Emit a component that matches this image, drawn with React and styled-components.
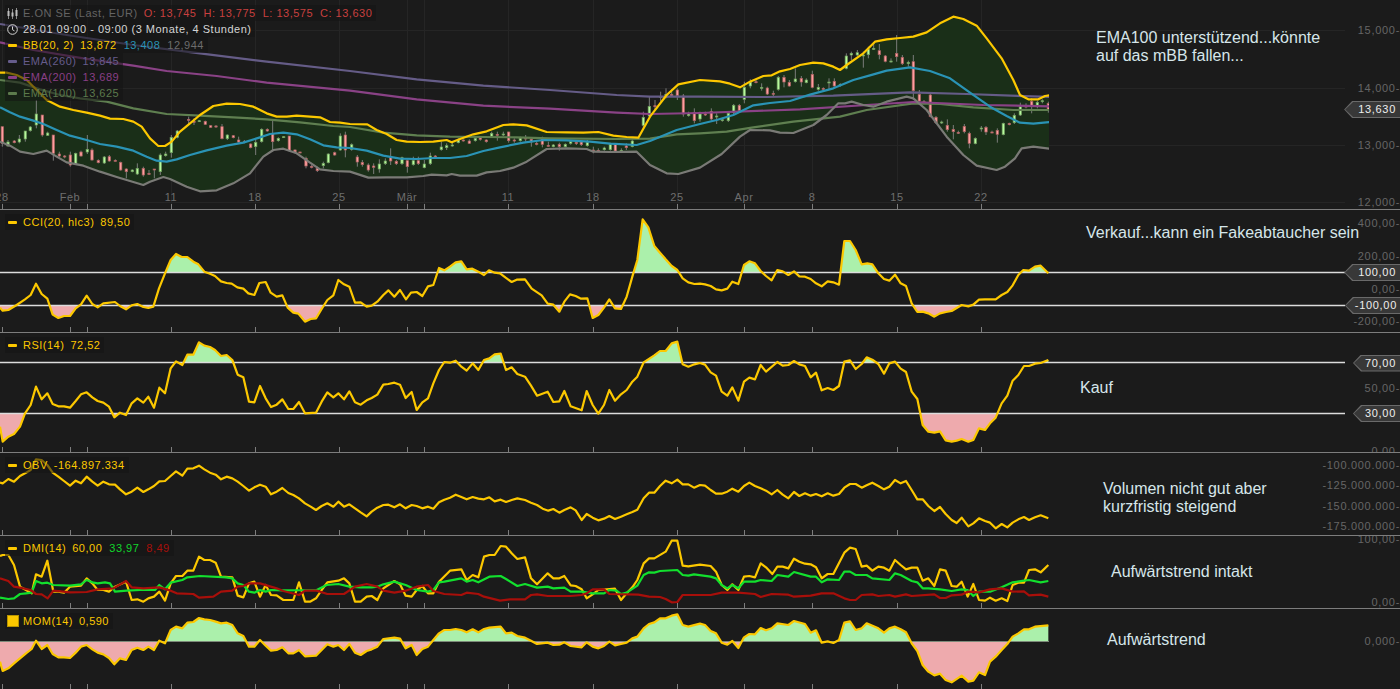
import styled, { createGlobalStyle } from "styled-components";

const GlobalStyle = createGlobalStyle`
  html, body {
    margin: 0;
    padding: 0;
    background: #1b1b1b;
  }
`;

// series were read off 3x crops, so every run holds crop coordinates
const run = (xOff, yOff, flat) => {
  const out = [];
  for (let i = 0; i < flat.length; i += 2) {
    out.push([xOff + flat[i] / 3, yOff + flat[i + 1] / 3]);
  }
  return out;
};
const toPoints = (list) => list.map(([x, y]) => `${x},${y}`).join(" ");

const BB_UPPER = [
  ...run(0, 0, [0,218,20,218,50,225,80,240,110,270,140,300,180,320,220,330,260,338,300,347,330,356,370,357,400,365,425,380,450,415,475,438,495,438,515,425,540,395,570,370,600,345,640,318,680,311,720,312,760,320,800,340,830,350,860,350,890,347,920,349,960,352,990,366,1020,368]),
  ...run(350, 0, [0,372,52,373,80,390,110,402,140,420,170,425,210,426,250,425,290,420,305,427,330,417,370,403,410,394,460,375,490,373,530,376,590,396,650,397,700,398,745,396,790,407,830,411,865,413,900,350,950,285,985,253]),
  ...run(700, 0, [0,240,60,244,90,251,120,262,150,245,190,228,215,226,240,214,270,207,300,195,340,188,370,190,400,200,420,210,440,195,490,160,525,125,560,118,600,114,640,110,680,97,720,70,760,50,790,57,830,77,860,115,905,175,940,240,960,285,985,298,1015,298,1035,288,1050,286]),
];
const BB_MID = [
  ...run(0, 0, [0,322,30,337,60,350,100,362,130,372,170,390,210,407,260,420,300,432,350,440,400,452,440,470,470,482,500,485,530,478,570,465,620,451,680,437,730,428,780,412,810,402,850,398,890,403,930,418,970,436,1010,442]),
  ...run(350, 0, [0,444,50,452,100,467,150,476,200,477,250,474,300,474,350,468,400,453,450,442,520,428,580,420,650,421,720,425,780,431,860,435,900,423,980,390]),
  ...run(700, 0, [0,372,50,360,100,345,160,316,210,309,270,303,330,284,400,265,460,240,510,226,560,212,630,202,690,213,750,235,810,278,870,320,920,348,960,368,1000,371,1050,366]),
];
const BB_LOWER = [
  ...run(0, 0, [0,425,30,437,60,455,100,462,140,452,170,470,200,487,250,497,300,515,350,531,430,555,450,545,490,531,510,537,560,560,600,574,650,571,700,550,750,520,790,470,820,450,850,446,890,460,930,488,960,508,1000,513]),
  ...run(350, 0, [0,515,55,533,110,532,170,532,220,528,245,524,290,526,305,522,330,527,380,527,410,517,450,513,490,503,530,485,590,447,650,445,710,447,730,455,780,456,860,455,900,495,950,520,985,522]),
  ...run(700, 0, [0,503,65,462,120,410,150,390,210,391,240,398,280,399,340,375,380,345,415,310,435,310,455,305,490,315,520,320,560,305,620,290,640,295,680,330,740,410,790,465,830,497,890,510,915,500,945,475,965,445,1000,440,1050,446]),
];
const EMA100 = [
  ...run(0, 0, [0,240,60,248,120,268,180,285,240,295,320,305,400,325,500,342,600,347,700,352,800,358,900,367,1000,378]),
  ...run(350, 0, [0,381,100,398,200,406,300,410,400,411,500,412,600,415,800,417,900,416,980,403]),
  ...run(700, 0, [0,400,80,395,160,382,280,365,420,350,500,330,640,310,720,312,820,322,940,330,1050,330]),
];
const EMA200 = [
  ...run(0, 0, [0,127,100,150,250,175,400,197,500,213,650,228,800,248]),
  ...run(350, 0, [0,272,200,298,400,317,600,326,800,338,900,342]),
  ...run(700, 0, [0,339,300,328,500,315,640,306,850,315,1050,319]),
];
const EMA260 = [
  ...run(0, 0, [0,72,200,105,400,135,600,160,800,185]),
  ...run(350, 0, [0,213,200,238,400,257,600,270,800,285,900,290]),
  ...run(700, 0, [0,290,200,291,400,287,630,277,800,282,1050,291]),
];

// x, body top, body bottom, wick top, wick bottom, 1 = rising
const CANDLES = [
  [0, [7,380,430,380,440,0,24,426,438,420,440,1,43,423,428,420,430,0,58,417,426,405,430,1,76,393,417,393,425,1,91,381,392,378,395,1,109,342,375,300,385,1,127,345,405,345,410,0,143,399,406,395,408,1,160,405,460,405,482,0,178,462,468,455,472,0,194,468,470,465,475,0,211,465,495,455,500,0,227,460,492,458,495,1,243,456,468,452,470,0,262,448,456,405,462,1,276,450,480,445,482,0,295,481,488,478,490,0,313,471,489,468,492,1,328,470,483,465,485,0,346,481,482,478,484,0,362,487,510,485,512,0,379,507,515,505,535,0,397,510,515,508,517,1,412,505,522,490,525,1,430,505,525,500,530,0,447,520,522,510,525,0,463,507,510,507,535,0,481,465,515,460,525,1,497,462,467,455,470,1,514,412,458,405,473,1,532,393,412,390,415,1,566,358,360,350,372,0,582,364,366,355,375,0,598,362,364,360,366,1,616,364,373,362,375,0,632,377,382,375,384,0,648,378,380,375,384,0,666,380,416,372,418,0,682,405,416,403,420,1,700,407,413,405,415,0,716,420,426,410,428,0,733,425,427,420,430,0,752,432,443,430,445,0,767,427,440,420,465,1,785,388,425,385,428,1,802,388,393,385,395,0,818,400,425,362,455,0,835,415,422,412,425,1,851,410,412,408,414,1,868,408,452,408,455,0,885,450,456,448,460,0,900,456,458,455,460,0,918,475,498,470,505,0,935,499,501,495,505,0,952,505,512,500,516,0,970,490,497,485,505,1,985,462,488,460,490,1,1004,458,465,455,467,0,1021,408,450,400,452,1,1036,405,450,395,472,0]],
  [350, [5,434,448,430,452,1,22,471,486,465,500,0,37,487,494,480,500,0,55,495,510,490,515,0,71,498,502,490,522,0,88,492,507,478,518,1,106,483,491,475,495,1,122,473,483,445,495,0,139,484,491,480,495,0,156,473,491,470,495,1,172,482,500,478,518,0,190,482,494,470,497,1,205,482,491,470,495,0,223,492,503,480,505,1,241,468,491,458,495,1,256,468,471,465,475,0,274,441,449,425,452,1,290,437,443,430,450,1,307,435,436,425,440,1,325,420,428,415,430,1,340,420,422,418,425,0,358,423,430,418,432,0,376,415,422,410,425,1,391,414,418,408,422,0,409,420,425,418,428,0,425,400,409,395,412,1,442,403,404,395,422,0,460,402,404,395,408,1,476,396,422,395,428,0,493,420,423,415,428,0,511,414,422,410,425,1,527,414,416,405,425,0,544,418,426,415,440,0,560,430,432,425,436,0,577,415,433,410,442,0,595,436,438,425,440,0,610,435,440,432,442,1,628,433,440,428,452,0,646,433,440,430,442,1,662,425,430,420,434,1,679,427,431,425,435,0,694,426,434,425,438,0,712,427,437,420,440,1,730,450,452,440,460,0,745,451,453,445,456,0,763,444,449,440,452,1,781,433,449,428,452,1,796,431,453,430,456,0,814,451,453,445,458,1,829,438,443,430,450,0,847,423,440,418,442,1,880,352,376,335,385,1,898,319,348,290,352,1,915,317,318,300,330,0,932,289,292,275,305,1,948,283,292,265,295,1,965,283,287,268,290,0,982,270,287,265,300,0,1000,288,342,282,350,0,1016,342,347,335,350,1,1033,338,362,325,370,0]],
  [700, [0,342,357,335,365,1,16,342,344,335,348,0,34,334,357,325,362,0,50,348,350,340,372,1,67,359,361,355,365,1,85,340,362,335,366,1,101,316,338,312,345,1,118,316,332,312,335,0,133,262,298,245,310,1,151,247,258,238,265,1,168,245,247,240,250,0,185,262,264,250,272,1,202,264,282,260,285,0,220,280,282,272,290,0,235,232,268,228,272,1,252,232,246,225,262,0,268,247,258,240,260,0,286,237,245,205,248,1,304,235,246,228,260,0,319,240,248,235,250,1,337,223,262,212,265,0,355,262,268,252,272,1,370,265,267,262,270,0,387,246,248,235,270,1,403,244,258,235,260,0,421,253,257,250,260,1,439,168,205,160,208,1,454,160,165,155,180,1,472,158,165,150,168,1,490,165,167,155,203,1,505,148,164,140,175,1,521,145,147,130,150,1,538,152,164,132,178,0,556,168,184,165,187,0,573,183,185,175,188,1,590,160,170,105,185,0,607,172,191,165,195,0,625,187,191,182,200,1,640,185,272,165,300,0,658,283,303,270,315,0,672,305,307,300,312,0,691,285,349,280,352,0,708,352,368,348,372,0,725,366,368,362,372,1,742,376,389,358,395,0,760,388,395,375,418,0,775,397,399,392,402,0,793,379,395,372,400,0,808,400,430,395,445,0,826,415,431,412,433,1,844,384,386,378,395,1,858,382,396,378,405,0,876,396,398,392,400,0,892,391,403,385,428,0,910,370,404,368,406,1,928,370,374,368,376,0,943,346,368,340,372,1,961,320,345,308,348,1,978,318,320,310,325,0,995,304,318,295,340,0,1012,307,316,302,325,1,1027,302,305,298,310,1,1045,310,328,305,338,0]],
].flatMap(([off, f]) => {
  const out = [];
  for (let i = 0; i < f.length; i += 6) {
    out.push({
      x: off + f[i] / 3,
      top: f[i + 1] / 3,
      bottom: f[i + 2] / 3,
      wickTop: f[i + 3] / 3,
      wickBottom: f[i + 4] / 3,
      up: f[i + 5] === 1,
    });
  }
  return out;
});

const CCI = [
  ...run(0, 210, [0,293,8,302,25,300,50,285,75,268,92,255,108,221,125,252,142,266,158,314,175,324,192,318,210,318,227,295,243,283,260,257,277,282,293,292,310,280,345,276,360,288,378,298,395,286,412,282,430,291,445,294,460,290,477,235,495,190,512,150,528,132,545,141,562,141,580,155,595,163,613,185,630,191,645,198,663,214,680,219,695,221,712,232,730,236,745,250,763,255,778,219,797,216,812,248,830,260,847,256,863,293,880,308,895,311,915,335,932,327,948,325,965,297,982,270,1000,256,1015,210,1032,223,1048,230,1065,278,1082,277,1100,290,1115,287,1132,275,1150,255,1165,241,1183,260,1200,240,1218,268,1233,248,1250,246,1267,258,1284,229,1300,225,1317,174,1333,181,1350,170,1367,157,1384,154,1400,178,1417,176,1435,185,1452,195,1467,181,1484,188,1500,190,1517,203,1535,216,1550,209]),
  ...run(525, 210, [0,208,20,236,50,256,68,281,85,284,103,305,118,275,135,253,152,258,168,266,187,265,203,324,220,315,237,293,253,268,270,295,288,297,305,260,322,200,337,150,353,28,370,52,388,108,405,128,422,148,440,168,457,180,473,205,490,217,508,222,525,221,540,223,557,228,573,238,590,241,607,236,622,215,640,222,657,165,673,154,690,160,707,183,723,198,740,211,757,180,773,184,790,195,807,184,823,199,840,200,857,207,873,220,890,229,908,214,925,217,942,224,958,93,975,93,992,120,1010,163,1027,160,1042,163,1060,190,1077,207,1093,212,1110,194,1127,220,1143,228,1160,280,1177,306,1193,305,1210,310,1228,320,1245,310,1263,306,1280,303,1310,285,1330,289,1345,284,1362,269,1380,268,1412,268,1430,255,1447,246,1463,226,1480,195,1495,180,1512,182,1530,170,1547,167,1570,190]),
];
const RSI = [
  ...run(0, 210, [0,650,8,695,25,680,42,672,60,650,75,610,92,585,108,530,125,568,142,550,158,582,175,589,192,589,210,593,227,573,243,553,260,547,277,562,293,573,310,578,327,590,343,622,360,608,378,615,395,580,412,565,430,578,445,560,462,593,478,533,495,550,512,475,528,454,547,465,562,434,580,434,597,397,613,407,630,411,645,420,663,438,680,435,697,450,713,494,730,502,747,575,763,577,780,528,797,565,813,591,830,584,847,568,865,597,880,597,897,576,915,610,948,608,965,575,982,547,1000,562,1015,550,1032,568,1048,544,1065,577,1082,584,1100,571,1115,564,1132,554,1150,524,1165,522,1183,518,1200,524,1217,564,1235,546,1250,600,1267,577,1284,565,1300,520,1317,480,1333,456,1350,458,1367,452,1384,470,1400,482,1418,460,1435,480,1452,450,1468,445,1484,433,1502,431,1518,480,1535,472,1552,492]),
  ...run(525, 210, [0,500,18,527,36,557,68,545,85,576,103,574,118,543,137,589,170,601,185,543,203,585,220,611,237,585,253,540,270,572,288,553,305,540,322,515,337,500,356,457,388,436,405,423,422,423,440,400,457,395,473,463,490,470,508,463,525,459,540,464,557,487,573,497,590,545,607,557,622,532,640,572,657,515,673,503,690,508,707,465,723,485,757,456,773,467,790,465,807,453,823,463,840,468,857,502,873,488,890,541,908,534,925,540,942,528,958,455,975,451,992,477,1010,462,1025,442,1042,449,1060,462,1077,491,1093,460,1110,455,1127,476,1143,486,1160,545,1177,567,1193,645,1210,665,1228,668,1245,664,1262,691,1280,695,1295,692,1310,687,1330,695,1345,690,1362,655,1380,660,1395,640,1412,623,1430,580,1447,557,1463,512,1480,495,1497,468,1512,468,1530,461,1547,459,1570,450]),
];
const OBV = [
  ...run(0, 450, [0,98,8,100,25,87,42,95,60,78,75,70,92,60,108,28,125,30,142,45,158,68,175,80,192,93,210,107,227,92,243,100,260,80,277,95,293,107,310,95,327,103,345,104,360,118,378,133,395,125,412,113,430,126,445,118,462,108,478,94,495,93,512,78,528,64,547,77,562,56,580,55,597,47,613,58,630,68,647,74,663,88,680,80,697,85,713,95,730,108,747,122,763,112,780,104,797,110,813,133,830,125,847,114,865,129,880,135,897,145,915,160,932,170,948,180,965,168,982,160,1000,170,1015,155,1032,170,1048,163,1065,175,1082,187,1100,199,1115,185,1132,173,1150,165,1165,164,1183,172,1200,163,1217,175,1235,165,1250,168,1267,175,1284,170,1300,176,1317,157,1333,149,1350,143,1367,134,1384,141,1400,148,1418,141,1435,146,1452,148,1468,142,1484,154,1502,149,1518,156,1535,150,1552,145]),
  ...run(525, 450, [0,150,18,158,36,165,53,176,70,182,85,177,103,188,118,180,137,172,152,181,170,210,185,192,203,203,220,211,237,206,253,198,270,207,288,200,305,193,322,186,337,179,356,145,372,128,388,128,405,108,422,92,440,100,457,89,473,103,490,103,507,113,525,105,540,107,557,120,573,131,590,131,607,125,622,116,640,125,657,108,673,98,690,108,707,115,723,122,740,133,757,120,773,134,790,145,807,126,823,138,840,130,857,137,873,132,890,139,908,130,925,137,942,132,958,113,975,102,992,102,1010,113,1025,106,1042,98,1060,108,1077,118,1093,110,1110,90,1127,100,1143,93,1160,120,1177,148,1193,148,1210,168,1228,183,1245,171,1262,192,1280,210,1295,219,1310,203,1330,229,1345,220,1362,205,1380,213,1395,218,1412,235,1430,222,1447,232,1463,218,1480,208,1497,201,1512,210,1530,202,1547,196,1570,205]),
];
const DMI = [
  ...run(0, 450, [0,318,8,315,25,315,42,345,60,410,78,420,95,430,108,373,125,380,142,332,160,425,175,425,192,428,210,410,243,407,260,385,277,400,293,420,310,420,327,425,345,410,378,395,395,450,412,448,430,455,445,445,462,440,478,425,495,452,512,400,528,378,547,378,562,362,580,362,597,320,613,330,630,330,647,338,663,380,697,382,713,437,730,442,747,400,763,395,780,440,797,405,813,435,830,436,850,450,880,450,897,397,915,455,930,455,948,445,965,420,982,397,1015,392,1032,385,1048,400,1065,455,1082,455,1100,440,1115,438,1132,450,1150,415,1183,393,1200,403,1217,437,1235,440,1250,420,1267,408,1284,430,1300,430,1317,395,1350,362,1384,358,1400,390,1418,375,1435,382,1452,320,1468,315,1484,315,1502,288,1518,290,1535,310,1552,327]),
  ...run(525, 450, [0,322,18,385,36,403,68,370,85,385,103,385,118,378,137,406,152,408,170,418,185,445,203,433,220,420,270,416,288,450,305,430,322,412,337,390,356,340,372,325,388,325,422,305,440,272,457,272,473,347,490,349,525,344,557,348,573,365,590,405,607,420,622,403,640,420,657,380,673,378,690,382,707,340,723,352,742,372,757,350,773,350,790,355,807,326,823,335,840,341,857,343,873,352,890,385,908,372,925,372,958,308,975,293,992,297,1010,350,1025,347,1042,362,1060,350,1077,353,1093,362,1110,330,1127,345,1143,358,1160,353,1177,353,1193,392,1210,385,1228,408,1245,358,1262,362,1280,408,1295,410,1310,395,1328,440,1345,402,1362,450,1380,452,1395,443,1412,452,1430,445,1447,453,1463,405,1480,398,1497,398,1512,360,1530,358,1547,367,1570,345]),
];
const DMI_PLUS = [
  ...run(0, 450, [0,443,25,447,42,445,60,432,78,430,95,428,108,393,125,400,142,398,160,405,210,407,243,403,260,390,277,397,293,400,315,397,330,400,345,425,380,422,420,420,465,420,478,405,495,418,512,398,547,390,562,382,600,378,680,382,697,385,713,400,730,405,747,425,763,428,780,420,797,425,813,420,847,421,950,420,980,405,1015,402,1048,410,1082,412,1115,412,1132,410,1150,403,1183,395,1217,405,1250,420,1284,425,1300,420,1317,397,1333,395,1384,385,1400,395,1418,390,1435,397,1468,380,1502,378,1518,387,1552,408]),
  ...run(525, 450, [0,402,36,413,68,410,85,415,118,413,137,425,170,425,203,430,237,430,253,420,275,422,288,432,305,428,337,407,356,375,372,367,388,368,405,363,457,360,473,375,490,377,507,373,557,380,573,385,590,405,607,415,622,405,640,415,657,395,690,395,707,390,740,393,757,375,790,380,807,366,857,380,873,380,890,397,908,388,942,390,958,365,975,365,992,375,1025,375,1042,385,1093,390,1110,370,1127,375,1160,393,1177,397,1193,415,1210,415,1245,418,1280,423,1310,418,1328,420,1345,438,1362,425,1395,425,1430,412,1463,397,1497,392,1512,390,1547,397,1570,393]),
];
const DMI_MINUS = [
  ...run(0, 450, [0,385,25,393,42,410,60,413,92,420,108,432,125,433,143,445,160,422,210,427,260,426,293,418,340,415,378,393,395,412,430,415,478,412,512,422,530,430,580,432,597,443,640,440,663,425,697,422,713,410,730,408,747,400,780,400,830,415,850,423,897,435,915,422,950,422,982,432,1032,432,1065,410,1100,402,1132,410,1150,422,1183,428,1217,422,1250,410,1284,405,1300,423,1333,432,1384,435,1400,428,1435,432,1452,440,1500,452,1530,448]),
  ...run(525, 450, [0,448,18,435,36,433,68,438,137,438,170,435,185,430,203,418,237,418,253,432,340,434,372,440,405,441,422,447,440,457,457,456,473,435,557,435,590,428,640,428,690,432,707,441,740,432,790,434,807,440,857,437,890,430,925,430,958,445,975,450,992,450,1010,435,1042,433,1060,438,1093,435,1110,440,1143,433,1160,438,1228,433,1245,444,1262,444,1280,436,1310,434,1328,425,1362,427,1395,418,1430,415,1463,425,1497,424,1512,436,1547,434,1570,440]),
];
const MOM = [
  ...run(0, 450, [0,635,8,663,25,655,42,640,60,625,78,610,95,597,108,572,125,597,142,585,158,612,175,622,192,622,210,624,227,608,243,590,260,585,277,598,293,608,310,613,327,624,343,643,360,625,378,630,395,600,412,593,430,600,445,590,462,600,478,572,495,580,512,540,528,530,547,535,562,518,580,516,597,504,613,508,630,510,647,515,663,520,680,518,697,525,713,550,730,558,747,590,763,590,780,570,797,587,813,602,830,600,847,592,865,610,880,610,897,600,915,619,948,617,965,600,982,583,1000,590,1015,585,1032,600,1048,582,1065,608,1082,615,1100,603,1115,598,1132,590,1150,567,1183,563,1200,566,1217,595,1235,585,1250,615,1267,597,1284,590,1300,570,1317,550,1333,540,1350,540,1367,537,1384,540,1400,547,1418,538,1435,547,1452,537,1468,533,1502,530,1518,550,1535,548,1552,558]),
  ...run(525, 450, [0,563,18,572,36,582,68,578,85,585,103,584,118,577,137,588,170,592,185,577,203,590,220,595,237,588,253,575,270,586,288,582,305,578,322,565,337,560,356,535,372,522,388,517,405,505,422,505,440,497,457,493,473,525,490,530,525,521,540,525,557,543,573,550,590,578,607,584,622,573,640,594,657,562,673,552,690,553,707,534,723,541,740,535,757,520,790,525,807,513,840,522,857,548,873,541,890,578,908,574,925,579,942,570,958,518,975,514,992,540,1010,535,1025,520,1060,535,1077,548,1093,535,1110,530,1127,538,1143,547,1160,580,1177,603,1193,645,1210,665,1228,676,1245,671,1262,690,1280,697,1310,677,1330,695,1345,692,1362,667,1380,675,1395,635,1412,620,1430,600,1447,582,1463,560,1480,550,1497,538,1512,538,1530,530,1570,526]),
];

const TICKS = [2.5, 70.5, 87.5, 171.5, 255.5, 339.5, 407.5, 424.5, 508.5, 593.5, 677.5, 744.5, 812.5, 897.5, 981.5];
const DATE_LABELS = [
  [2, "28"], [70, "Feb"], [171, "11"], [255, "18"], [339, "25"], [407, "Mär"], [508, "11"],
  [593, "18"], [677, "25"], [744, "Apr"], [812, "8"], [897, "15"], [981, "22"],
];
const CHART_END = 1049;
const YELLOW = "#fcc800";

const Page = styled.div`
  width: 1400px;
  height: 689px;
  overflow: hidden;
  display: flex;
  flex-direction: column;
  background: #1b1b1b;
  font-family: "Liberation Sans", Arial, sans-serif;
`;

const Pane = styled.section`
  position: relative;
  flex: none;
  height: ${(p) => p.$height}px;
  display: flex;
  overflow: hidden;
  border-bottom: ${(p) => (p.$last ? "none" : "1px solid #7d7d7d")};
`;

const Plot = styled.svg`
  display: block;
  flex: none;
  width: 1345px;
  height: 100%;
`;

const Axis = styled.div`
  position: relative;
  flex: none;
  width: 55px;
`;

const AxisLabel = styled.span`
  position: absolute;
  right: 0;
  top: ${(p) => p.$y - 7}px;
  height: 14px;
  line-height: 14px;
  font-size: 11px;
  letter-spacing: 0.7px;
  white-space: nowrap;
  color: #666;
`;

const TagShape = styled.span`
  position: absolute;
  right: 0;
  top: ${(p) => p.$y - 8.5}px;
  height: 17px;
  padding: 1px 0 1px 1px;
  box-sizing: border-box;
  background: #6a6a6a;
  clip-path: polygon(8px 0, 100% 0, 100% 100%, 8px 100%, 0 50%);
`;

const TagText = styled.span`
  display: block;
  height: 15px;
  line-height: 15px;
  padding: 0 ${(p) => p.$pad}px 0 ${(p) => p.$lead}px;
  font-size: 11px;
  letter-spacing: 0.7px;
  color: #eee;
  background: #383838;
  clip-path: polygon(8px 0, 100% 0, 100% 100%, 8px 100%, 0 50%);
`;

const Legend = styled.div`
  position: absolute;
  left: 5px;
  top: ${(p) => p.$top ?? 4}px;
  display: flex;
  flex-direction: column;
  align-items: flex-start;
`;

const LegendRow = styled.div`
  height: 16px;
  padding: 0 4px 0 3px;
  display: flex;
  align-items: center;
  gap: 6px;
  font-size: 11px;
  letter-spacing: 0.5px;
  white-space: nowrap;
  background: rgba(20, 20, 20, 0.55);
`;

const Values = styled.span`
  display: flex;
  gap: 7px;
`;

const Value = styled.span`
  color: ${(p) => p.$color};
`;

const Swatch = styled.i`
  flex: none;
  width: 9px;
  height: 3px;
  border-radius: 1px;
  background: ${(p) => p.$color};
`;

const SquareSwatch = styled.i`
  flex: none;
  width: 10px;
  height: 10px;
  margin: 0 -2px 0 -1px;
  border: 1px solid #b89400;
  background: ${YELLOW};
`;

const LegendIcon = styled.svg`
  flex: none;
  width: 11px;
  height: 11px;
  margin: 0 -1px;
`;

const Note = styled.p`
  position: absolute;
  left: ${(p) => p.$left}px;
  top: ${(p) => p.$top}px;
  margin: 0;
  font-size: 16px;
  line-height: 18px;
  white-space: nowrap;
  color: #d6e6ea;
`;

const DateLabel = styled.text`
  font-size: 11px;
  letter-spacing: 0.55px;
  fill: #6e6e6e;
  text-anchor: middle;
`;

const Line = ({ points, color, width = 2.2 }) => (
  <polyline
    points={toPoints(points)}
    fill="none"
    stroke={color}
    strokeWidth={width}
    strokeLinejoin="round"
  />
);

const TickMarks = ({ bottom }) => (
  <g stroke="#7d7d7d">
    {TICKS.map((x) => (
      <line key={x} x1={x} x2={x} y1={bottom - 5} y2={bottom} />
    ))}
  </g>
);

// green above the upper level, pink below the lower one
const Shaded = ({ id, points, top, upper, lower, bottom }) => {
  const first = points[0][0];
  const last = points[points.length - 1][0];
  const shape = (level) =>
    toPoints([[first, level], ...points, [last, level]]);
  return (
    <g>
      <clipPath id={`${id}-up`}>
        <rect x="0" y={top} width={CHART_END} height={upper - top} />
      </clipPath>
      <clipPath id={`${id}-down`}>
        <rect x="0" y={lower} width={CHART_END} height={bottom - lower} />
      </clipPath>
      <polygon points={shape(upper)} fill="#abf0ab" clipPath={`url(#${id}-up)`} />
      <polygon points={shape(lower)} fill="#eeaaad" clipPath={`url(#${id}-down)`} />
    </g>
  );
};

const Level = ({ y }) => (
  <line x1="0" x2="1346" y1={y} y2={y} stroke="#dcdcdc" strokeWidth="1.3" />
);

const Candle = ({ candle }) => {
  const { x, top, bottom, wickTop, wickBottom, up } = candle;
  return (
    <g>
      <line x1={x} x2={x} y1={wickTop} y2={wickBottom} stroke="#858585" strokeWidth="0.9" />
      <rect
        x={x - 1.2}
        y={top}
        width="2.4"
        height={Math.max(bottom - top, 1)}
        fill={up ? "#b6fa9c" : "#ff9d9d"}
        stroke={up ? "#6e9a5c" : "#a85f5f"}
        strokeWidth="0.7"
      />
    </g>
  );
};

const BarsIcon = () => (
  <LegendIcon viewBox="0 0 11 11" fill="none">
    <path d="M1.5 0v11M5.5 1v10M9.5 0v11" stroke="#8a8a8a" />
    <rect x="0.5" y="3" width="2" height="5" fill="#bdbdbd" />
    <rect x="4.5" y="4.5" width="2" height="4" fill="#bdbdbd" />
    <rect x="8.5" y="2" width="2" height="6" fill="#bdbdbd" />
  </LegendIcon>
);

const ClockIcon = () => (
  <LegendIcon viewBox="0 0 11 11" fill="none" stroke="#d8d8d8" strokeWidth="1">
    <circle cx="5.5" cy="5.5" r="4.8" />
    <path d="M5.5 2.5v3.2l2 1.2" />
  </LegendIcon>
);

const MainLegend = () => (
  <Legend $top={5}>
    <LegendRow>
      <BarsIcon />
      <Value $color="#646464">E.ON SE (Last, EUR)</Value>
      <Values>
        <Value $color="#c8403f">O: 13,745</Value>
        <Value $color="#c8403f">H: 13,775</Value>
        <Value $color="#c8403f">L: 13,575</Value>
        <Value $color="#c8403f">C: 13,630</Value>
      </Values>
    </LegendRow>
    <LegendRow>
      <ClockIcon />
      <Value $color="#d4d4d4">28.01 09:00 - 09:00 (3 Monate, 4 Stunden)</Value>
    </LegendRow>
    <LegendRow>
      <Swatch $color={YELLOW} />
      <Value $color={YELLOW}>BB(20, 2)</Value>
      <Values>
        <Value $color={YELLOW}>13,872</Value>
        <Value $color="#2a93b5">13,408</Value>
        <Value $color="#6c6c6c">12,944</Value>
      </Values>
    </LegendRow>
    <LegendRow>
      <Swatch $color="#665c8c" />
      <Value $color="#665c8c">EMA(260)</Value>
      <Value $color="#665c8c">13,845</Value>
    </LegendRow>
    <LegendRow>
      <Swatch $color="#8a3f86" />
      <Value $color="#8a3f86">EMA(200)</Value>
      <Value $color="#8a3f86">13,689</Value>
    </LegendRow>
    <LegendRow>
      <Swatch $color="#5c7a4c" />
      <Value $color="#5c7a4c">EMA(100)</Value>
      <Value $color="#5c7a4c">13,625</Value>
    </LegendRow>
  </Legend>
);

const IndicatorLegend = ({ name, values, square }) => (
  <Legend>
    <LegendRow>
      {square ? <SquareSwatch /> : <Swatch $color={YELLOW} />}
      <Value $color={YELLOW}>{name}</Value>
      <Values>
        {values.map(([text, color]) => (
          <Value key={text} $color={color}>
            {text}
          </Value>
        ))}
      </Values>
    </LegendRow>
  </Legend>
);

const MainPane = () => (
  <Pane $height={209}>
    <Plot viewBox="0 0 1345 209" preserveAspectRatio="none">
      <clipPath id="main-clip">
        <rect x="0" y="0" width={CHART_END} height="209" />
      </clipPath>
      <g stroke="#252525">
        {[30.5, 88.5, 145.5, 202.5].map((y) => (
          <line key={y} x1="0" x2="1345" y1={y} y2={y} />
        ))}
        {TICKS.map((x) => (
          <line key={x} x1={x} x2={x} y1="0" y2="209" />
        ))}
      </g>
      <g clipPath="url(#main-clip)">
        <polygon
          points={toPoints([...BB_UPPER, ...[...BB_LOWER].reverse()])}
          fill="#1a2f18"
        />
        {CANDLES.map((candle, i) => (
          <Candle key={i} candle={candle} />
        ))}
        <Line points={EMA100} color="#5f7f50" />
        <Line points={EMA200} color="#8a4286" />
        <Line points={EMA260} color="#655c87" />
        <Line points={BB_LOWER} color="#7a7a76" />
        <Line points={BB_MID} color="#2a93b5" />
        <Line points={BB_UPPER} color={YELLOW} />
      </g>
      {DATE_LABELS.map(([x, text], i) => (
        <DateLabel key={i} x={x} y="201">
          {text}
        </DateLabel>
      ))}
      <TickMarks bottom={209} />
    </Plot>
    <Axis>
      <AxisLabel $y={30}>15,000-</AxisLabel>
      <AxisLabel $y={88}>14,000-</AxisLabel>
      <TagShape $y={109.5}>
        <TagText $lead={13} $pad={4}>13,630</TagText>
      </TagShape>
      <AxisLabel $y={145}>13,000-</AxisLabel>
      <AxisLabel $y={202}>12,000-</AxisLabel>
    </Axis>
    <MainLegend />
    <Note $left={1096} $top={29}>
      EMA100 unterstützend...könnte
      <br />
      auf das mBB fallen...
    </Note>
  </Pane>
);

const CciPane = () => (
  <Pane $height={122}>
    <Plot viewBox="0 210 1345 122" preserveAspectRatio="none">
      <Shaded id="cci" points={CCI} top={210} upper={272.5} lower={305.5} bottom={332} />
      <Level y={272.5} />
      <Level y={305.5} />
      <Line points={CCI} color={YELLOW} />
      <TickMarks bottom={332} />
    </Plot>
    <Axis>
      <AxisLabel $y={13}>400,00-</AxisLabel>
      <AxisLabel $y={46}>200,00-</AxisLabel>
      <TagShape $y={62.5}>
        <TagText $lead={13} $pad={4}>100,00</TagText>
      </TagShape>
      <AxisLabel $y={79}>0,00-</AxisLabel>
      <TagShape $y={95.5}>
        <TagText $lead={9} $pad={3}>-100,00</TagText>
      </TagShape>
      <AxisLabel $y={111}>-200,00-</AxisLabel>
    </Axis>
    <IndicatorLegend name="CCI(20, hlc3)" values={[["89,50", YELLOW]]} />
    <Note $left={1086} $top={14}>Verkauf...kann ein Fakeabtaucher sein</Note>
  </Pane>
);

const RsiPane = () => (
  <Pane $height={119}>
    <Plot viewBox="0 333 1345 119" preserveAspectRatio="none">
      <Shaded id="rsi" points={RSI} top={333} upper={362.5} lower={413.5} bottom={452} />
      <Level y={362.5} />
      <Level y={413.5} />
      <Line points={RSI} color={YELLOW} />
      <TickMarks bottom={452} />
    </Plot>
    <Axis>
      <TagShape $y={30}>
        <TagText $lead={11} $pad={4}>70,00</TagText>
      </TagShape>
      <AxisLabel $y={55}>50,00-</AxisLabel>
      <TagShape $y={80.5}>
        <TagText $lead={11} $pad={4}>30,00</TagText>
      </TagShape>
      <AxisLabel $y={118}>0,00-</AxisLabel>
    </Axis>
    <IndicatorLegend name="RSI(14)" values={[["72,52", YELLOW]]} />
    <Note $left={1080} $top={46}>Kauf</Note>
  </Pane>
);

const ObvPane = () => (
  <Pane $height={82}>
    <Plot viewBox="0 453 1345 82" preserveAspectRatio="none">
      <Line points={OBV} color={YELLOW} />
      <TickMarks bottom={535} />
    </Plot>
    <Axis>
      <AxisLabel $y={12}>-100.000.000-</AxisLabel>
      <AxisLabel $y={32}>-125.000.000-</AxisLabel>
      <AxisLabel $y={53}>-150.000.000-</AxisLabel>
      <AxisLabel $y={73}>-175.000.000-</AxisLabel>
    </Axis>
    <IndicatorLegend name="OBV" values={[["-164.897.334", YELLOW]]} />
    <Note $left={1103} $top={27}>
      Volumen nicht gut aber
      <br />
      kurzfristig steigend
    </Note>
  </Pane>
);

const DmiPane = () => (
  <Pane $height={72}>
    <Plot viewBox="0 536 1345 72" preserveAspectRatio="none">
      <Line points={DMI} color={YELLOW} />
      <Line points={DMI_PLUS} color="#12e02e" />
      <Line points={DMI_MINUS} color="#a80f0a" />
      <TickMarks bottom={608} />
    </Plot>
    <Axis>
      <AxisLabel $y={3}>100,00-</AxisLabel>
      <AxisLabel $y={66}>0,00-</AxisLabel>
    </Axis>
    <IndicatorLegend
      name="DMI(14)"
      values={[
        ["60,00", YELLOW],
        ["33,97", "#12d42c"],
        ["8,49", "#a80f0a"],
      ]}
    />
    <Note $left={1111} $top={27}>Aufwärtstrend intakt</Note>
  </Pane>
);

const MomPane = () => (
  <Pane $height={80} $last>
    <Plot viewBox="0 609 1345 80" preserveAspectRatio="none">
      <Shaded id="mom" points={MOM} top={609} upper={641} lower={641} bottom={689} />
      <line x1="0" x2={CHART_END} y1="641.5" y2="641.5" stroke="#7d8a7a" />
      <Line points={MOM} color={YELLOW} />
      <TickMarks bottom={689} />
    </Plot>
    <Axis>
      <AxisLabel $y={32}>0,000-</AxisLabel>
    </Axis>
    <IndicatorLegend name="MOM(14)" values={[["0,590", YELLOW]]} square />
    <Note $left={1107} $top={22}>Aufwärtstrend</Note>
  </Pane>
);

const App = () => (
  <Page>
    <GlobalStyle />
    <MainPane />
    <CciPane />
    <RsiPane />
    <ObvPane />
    <DmiPane />
    <MomPane />
  </Page>
);

export default App;
